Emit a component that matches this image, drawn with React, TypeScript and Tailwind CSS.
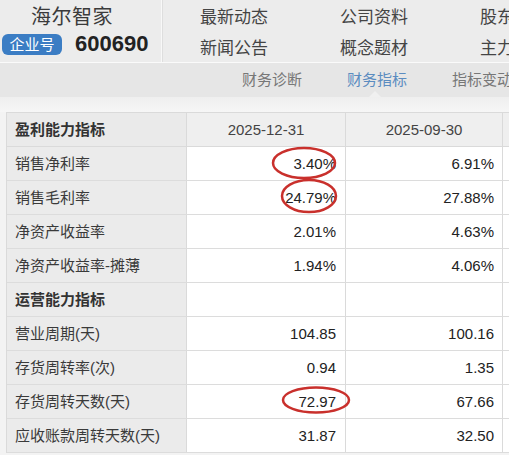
import React from 'react';

type Row = { label: string; a?: string; b?: string; section?: boolean };

const rows: Row[] = [
  { label: '销售净利率', a: '3.40%', b: '6.91%' },
  { label: '销售毛利率', a: '24.79%', b: '27.88%' },
  { label: '净资产收益率', a: '2.01%', b: '4.63%' },
  { label: '净资产收益率-摊薄', a: '1.94%', b: '4.06%' },
  { label: '运营能力指标', section: true },
  { label: '营业周期(天)', a: '104.85', b: '100.16' },
  { label: '存货周转率(次)', a: '0.94', b: '1.35' },
  { label: '存货周转天数(天)', a: '72.97', b: '67.66' },
  { label: '应收账款周转天数(天)', a: '31.87', b: '32.50' },
];

const font = { fontFamily: '"Liberation Sans", "Noto Sans CJK SC", sans-serif' };

export default function App() {
  return (
    <div className="relative w-[509px] h-[455px] overflow-hidden bg-[#f3f3f3] text-[#333]" style={font}>
      {/* Top header */}
      <div className="flex h-[63px] bg-[#ececec] border-b border-[#fafafa]">
        <div className="w-[162px] shrink-0 flex flex-col border-r border-[#f8f8f8]">
          <div className="pl-[31px] pt-[3px] h-[33px] text-[20px] leading-[28px] text-[#3a3a3a] tracking-[0.5px]">海尔智家</div>
          <div className="flex items-center">
            <span className="ml-[2px] w-[60px] h-[21px] rounded-[6px] bg-[#3b7dc4] text-white text-[15px] leading-[21px] text-center">企业号</span>
            <span className="ml-[13px] text-[22px] leading-[22px] font-bold text-[#222]">600690</span>
          </div>
        </div>
        <div className="grid grid-cols-[140px_140px_140px] pl-[37px] pt-[2px] text-[17px] leading-[31px] text-[#444] border-l border-[#dedede] whitespace-nowrap">
          <span>最新动态</span>
          <span>公司资料</span>
          <span>股东研究</span>
          <span>新闻公告</span>
          <span>概念题材</span>
          <span>主力持仓</span>
        </div>
      </div>

      {/* Sub nav */}
      <div className="relative flex h-[34px] bg-[#e6e6e6] pl-[242px] gap-[45px] text-[15px] leading-[34px] text-[#777] whitespace-nowrap">
        <span className="shrink-0">财务诊断</span>
        <span className="shrink-0 text-[#5b8cc0]">财务指标</span>
        <span className="shrink-0">指标变动说明</span>
        <span className="absolute left-[369px] bottom-0 w-0 h-0 border-l-[6px] border-r-[6px] border-b-[6px] border-l-transparent border-r-transparent border-b-[#f0f0f0]" />
      </div>
      <div className="h-[15px] bg-gradient-to-b from-[#efefef] to-[#f6f6f6]" />

      {/* Table */}
      <div className="ml-[6px] bg-white border-l border-t border-[#dadada]">
        <div className="flex h-[34px] bg-[#efefef] border-b border-[#dadada] text-[15px]">
          <div className="w-[180px] shrink-0 bg-[#eaeaea] pl-[8px] leading-[33px] font-bold text-[#333] border-r border-[#dadada]">盈利能力指标</div>
          <div className="w-[159px] shrink-0 text-center leading-[33px] border-r border-[#dadada] text-[#444]">2025-12-31</div>
          <div className="w-[157px] shrink-0 text-center leading-[33px] border-r border-[#dadada] text-[#444]">2025-09-30</div>
          <div className="flex-1" />
        </div>
        {rows.map((r) => (
          <div key={r.label} className="flex h-[34px] border-b border-[#dcdcdc] text-[15px]">
            <div className={`w-[180px] shrink-0 bg-[#ebebeb] pl-[8px] leading-[33px] border-r border-[#dadada] ${r.section ? 'font-bold text-[#333]' : 'text-[#3a3a3a]'}`}>{r.label}</div>
            <div className="w-[159px] shrink-0 text-right pr-[9px] leading-[33px] border-r border-[#dadada] text-[#222]">{r.a}</div>
            <div className="w-[157px] shrink-0 text-right pr-[8px] leading-[33px] border-r border-[#dadada] text-[#222]">{r.b}</div>
            <div className="flex-1" />
          </div>
        ))}
      </div>

      {/* Red annotation circles */}
      <svg className="absolute left-0 top-0 pointer-events-none" width="509" height="455">
        <ellipse cx="304" cy="163" rx="31" ry="15" fill="none" stroke="#c9302c" strokeWidth="2.5" />
        <ellipse cx="309" cy="196" rx="27" ry="16" fill="none" stroke="#c9302c" strokeWidth="2.5" />
        <ellipse cx="316" cy="400" rx="33" ry="12.5" fill="none" stroke="#c9302c" strokeWidth="2.5" />
      </svg>
    </div>
  );
}
